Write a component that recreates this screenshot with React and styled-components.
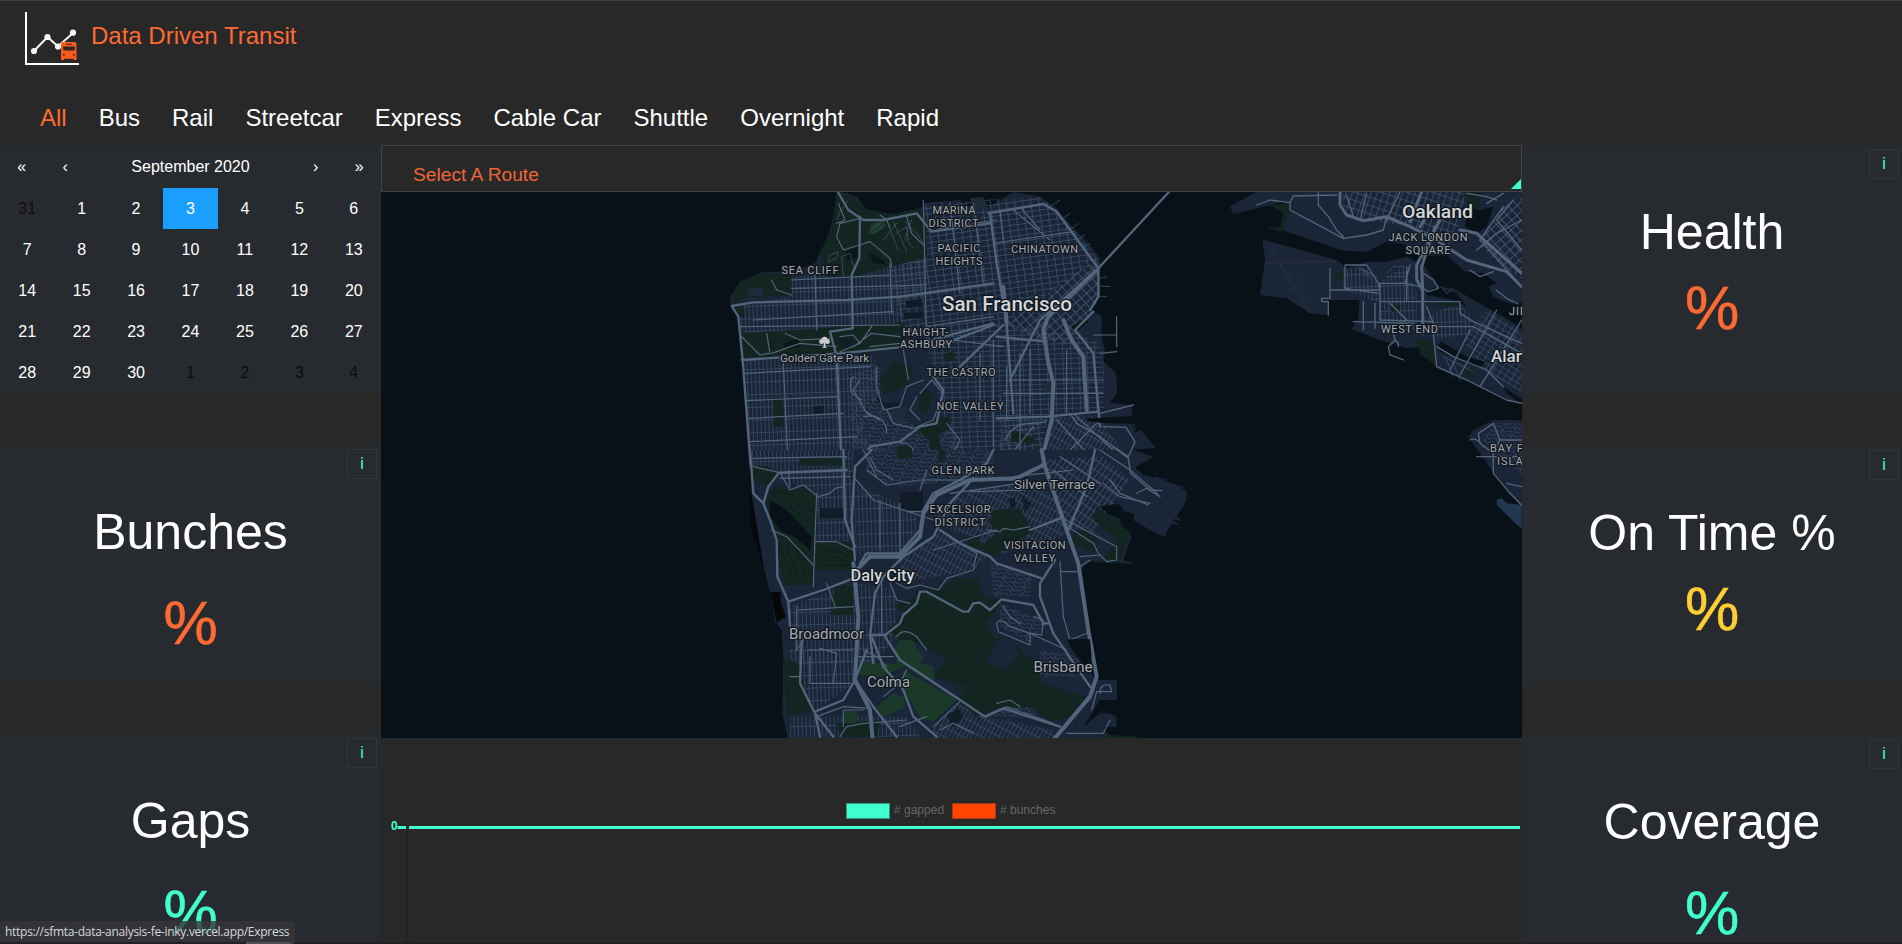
import React from "react";
import styled, { createGlobalStyle } from "styled-components";

const GlobalStyle = createGlobalStyle`
  * { box-sizing: border-box; }
  body { margin: 0; background: #282828; color: #fff; font-family: "Liberation Sans", Arial, sans-serif; overflow: hidden; }
`;

const Page = styled.div`
  position: relative;
  display: flex;
  flex-direction: column;
  width: 1902px;
  height: 944px;
  overflow: hidden;
  background: #282828;
  border-top: 1px solid #3d3d3d;
`;

const Header = styled.header`
  flex: none;
  height: 144px;
  display: flex;
  flex-direction: column;
  justify-content: space-between;
`;

const Brand = styled.div`
  display: flex;
  align-items: flex-start;
  padding: 10px 0 0 24px;
`;

const LogoMark = styled.svg`
  display: block;
  width: 56px;
  height: 56px;
  flex: none;
`;

const BrandName = styled.h1`
  margin: 11px 0 0 11px;
  font-size: 24px;
  line-height: 28px;
  font-weight: 400;
  color: #ff6a32;
`;

const Nav = styled.nav`
  display: flex;
  gap: 32px;
  padding: 0 40px 13px;
`;

const NavItem = styled.a`
  font-size: 24px;
  line-height: 28px;
  color: ${(p) => (p.$active ? "#ff6a32" : "#fff")};
`;

const Main = styled.main`
  flex: 1;
  min-height: 0;
  display: grid;
  grid-template-columns: 381px 1141px 380px;
`;

const Column = styled.section`
  display: flex;
  flex-direction: column;
  gap: 52px;
  min-height: 0;
  overflow: hidden;
`;

const Calendar = styled.div`
  flex: none;
  height: 248px;
  background: #272b30;
`;

const CalendarNav = styled.div`
  display: flex;
  height: 43px;
  align-items: center;
  font-size: 16px;
  line-height: 18px;
`;

const CalendarArrow = styled.span`
  width: 43.5px;
  text-align: center;
`;

const CalendarLabel = styled.span`
  flex: 1;
  text-align: center;
`;

const Days = styled.div`
  display: grid;
  grid-template-columns: repeat(7, 1fr);
  grid-auto-rows: 41px;
`;

const Day = styled.span`
  display: flex;
  align-items: center;
  justify-content: center;
  font-size: 16px;
  line-height: 18px;
  color: ${(p) => (p.$outside ? "#0c0d0e" : "#fff")};
  background: ${(p) => (p.$selected ? "#1a9fff" : "transparent")};
`;

const Card = styled.article`
  flex: none;
  display: flex;
  flex-direction: column;
  align-items: center;
  height: ${(p) => p.$height}px;
  padding-top: 4px;
  background: #272b30;
`;

const InfoButton = styled.button`
  align-self: flex-end;
  flex: none;
  width: 30px;
  height: 30px;
  margin-right: ${(p) => p.$inset}px;
  padding: 0 0 1px;
  border: 1px solid #283a3c;
  background: transparent;
  color: #40ffcf;
  font-family: inherit;
  font-size: 16px;
  line-height: 18px;
`;

const CardTitle = styled.h2`
  margin: 24px 0 0;
  font-size: 50px;
  line-height: 58px;
  font-weight: 400;
`;

const CardValue = styled.p`
  margin: ${(p) => p.$space}px 0 0;
  font-size: 61px;
  line-height: 74px;
  color: ${(p) => p.$color};
  -webkit-text-stroke: 0.5px ${(p) => p.$color};
`;

const Center = styled.section`
  display: flex;
  flex-direction: column;
  min-height: 0;
`;

const RouteSelect = styled.div`
  flex: none;
  display: flex;
  justify-content: space-between;
  align-items: flex-end;
  height: 47px;
  padding: 0 0 2px 31px;
  border: 1px solid #424242;
`;

const RouteLabel = styled.span`
  font-size: 19.2px;
  line-height: 22px;
  padding-bottom: 3px;
  color: #ee6536;
`;

const Corner = styled.span`
  width: 0;
  height: 0;
  border-left: 10px solid transparent;
  border-bottom: 10px solid #40ffcf;
`;

const MapCanvas = styled.svg`
  flex: none;
  display: block;
  width: 1141px;
  height: 546px;
  background: #081117;
`;

const Town = styled.text`
  font-family: Roboto, "Open Sans", sans-serif;
  font-size: ${(p) => p.$size}px;
  font-weight: ${(p) => (p.$strong ? 500 : 400)};
  fill: ${(p) => (p.$strong ? "#d3d5d6" : "#a7abae")};
  stroke: #10161e;
  stroke-width: 2.5px;
  stroke-linejoin: round;
  paint-order: stroke;
`;

const ChartCanvas = styled.svg`
  flex: none;
  display: block;
  width: 1141px;
  height: 206px;
`;

const ChartText = styled.text`
  font-family: "Liberation Sans", Arial, sans-serif;
  font-size: 12px;
  font-weight: ${(p) => (p.$bold ? 700 : 400)};
  fill: ${(p) => p.$color};
`;

const StatusBubble = styled.div`
  position: absolute;
  left: 0;
  bottom: 2px;
  height: 21px;
  width: 295px;
  padding-left: 5px;
  border-top-right-radius: 4px;
  background: rgba(54, 55, 59, 0.82);
  color: #d6d8da;
  font-family: "Open Sans", "Noto Sans", sans-serif;
  font-size: 12px;
  letter-spacing: -0.28px;
  line-height: 21px;
  white-space: nowrap;
`;

const WindowEdge = styled.div`
  position: absolute;
  left: 0;
  right: 0;
  bottom: 0;
  height: 2px;
  padding-left: 246px;
  background: #241f22;
`;

const EdgeTab = styled.div`
  width: 48px;
  height: 2px;
  background: #505050;
  border-right: 4px solid #3c3c3c;
`;

const routes = ["All", "Bus", "Rail", "Streetcar", "Express", "Cable Car", "Shuttle", "Overnight", "Rapid"];
const days = [31, ...Array.from({ length: 30 }, (_, i) => i + 1), 1, 2, 3, 4];

function Logo() {
  return (
    <LogoMark viewBox="24 11 56 56">
      <path d="M26 12V64H79" fill="none" stroke="#fff" strokeWidth="2" />
      <path d="M34 51L47.5 37L58 46.5L73 33" fill="none" stroke="#f5f5f5" strokeWidth="2" />
      <g fill="#f5f5f5">
        <circle cx="34" cy="51" r="3.1" />
        <circle cx="47.5" cy="37" r="3.1" />
        <circle cx="58" cy="46.5" r="3.1" />
        <circle cx="73" cy="32.7" r="3.1" />
      </g>
      <path d="M62.5 42H75L76.5 43.5V60H73.6V58.8H64V60H61V43.5Z" fill="#fa5a1c" />
      <path d="M66 43.7H72V44.8H66ZM63 46.6H75L74.6 50.4H63.4ZM63 54H64.8V55.6H63ZM73 54H74.8V55.6H73Z" fill="#33261f" />
    </LogoMark>
  );
}

function Streets({ id, w, h, angle, color = "#394b61", sw = 1.1 }) {
  return (
    <pattern id={id} width={w} height={h} patternUnits="userSpaceOnUse" patternTransform={`rotate(${angle})`}>
      <path d={`M0 0V${h}M0 0H${w}`} stroke={color} strokeWidth={sw * 4} />
    </pattern>
  );
}

const Shapes = ({ items }) => items.map(([fill, d], i) => <path key={i} fill={fill} d={d} />);
const Roads = ({ width, color = "#53657b", items }) => (
  <g fill="none" stroke={color} strokeWidth={width} strokeLinejoin="round" strokeLinecap="round">
    {items.map((d, i) => <path key={i} d={d} />)}
  </g>
);

const LAND = "#1a2638";
const PARK = "#122520";
const GREEN = "#1b3929";
const WATER = "#081117";
const SLATE = "#111c27";

const northLand =
  "M350 36L345 80L330 150L305 210L285 250L240 265L200 275H130L60 305L30 350L33 385L50 405L62 520L75 640L95 870H1240L1200 735L1100 725V714L1235 708V675H1165L1190 640V600L1185 575L1150 545L1155 515L1145 470V410L1115 390L1140 350V235L1105 190L1060 145L1010 85L960 50L880 36L850 55L800 85L790 55L740 80L720 60L620 68L600 85L520 103L440 88L410 50L380 40Z";

const southLand =
  "M90 0L95 135L130 345L150 430L165 515L185 540L190 620L187 790L205 870H1000L1110 740L1190 748V690H1125L1095 640L1040 572L1105 568L1080 410L1090 390L1075 360L1115 330L1190 335L1245 342L1210 330L1235 260L1160 170L1240 190L1245 215L1325 258L1350 230L1400 150L1395 120L1310 80L1265 85L1245 50L1300 20L1240 0Z";

const baysideLand =
  "M0 0H290V38L265 68L335 75V108L245 112V128L345 132L342 158L362 150L408 205L340 208L345 235L395 230L345 262L370 285L395 290L420 300L440 295L436 304L490 320L480 332L500 335V350L465 365L496 380L480 384L446 372L440 384L482 418L476 424L450 404L458 420L480 435L450 432L435 470L405 450L345 425L340 400L255 380L335 470L290 545L345 552L200 545L178 580L190 600L182 625L208 780L145 778L190 855L230 900H290V960H240L190 1040L240 1000L270 1000L290 1010V1040L250 1042L265 1065L350 1070V1080H0Z";

function NorthSide() {
  return (
    <g transform="translate(720 180) scale(.33333)">
      <Shapes
        items={[
          [LAND, northLand],
          ["url(#avenues)", "M215 290L510 260L620 235L620 350L560 370L530 440L68 458L55 380L215 350Z"],
          ["url(#avenues)", "M70 540L460 525L480 640L420 700L440 780L500 860H96Z"],
          ["url(#north)", "M615 70L960 50L1010 90L1135 240L850 430L650 500L550 460L510 260L615 235Z"],
          ["url(#diagonal)", "M1135 235L850 430L960 480L1050 490L1135 360Z"],
          ["url(#mission)", "M620 500L850 430L1135 480L1150 545V690L1000 700L830 860H700L650 620Z"],
          ["url(#hills)", "M385 580L480 560L480 660L600 750L690 730L730 800V860H400Z"],
          ["url(#south)", "M1000 710H1135L1240 860H960Z"],
          ["url(#north)", "M850 720H980L960 850H830Z"],
          [PARK, "M350 38L345 80L330 150L300 225L320 290L400 292L510 260L620 230V120L600 85L520 103L440 88L400 50Z"],
          [PARK, "M30 355L60 305L130 278L215 285L215 345L75 352L45 372ZM36 380L72 375V415L50 405Z"],
          [PARK, "M60 460L550 428V505L350 525L65 538Z"],
          [PARK, "M478 600L520 545L580 560L570 610L490 645ZM605 620L640 640L620 705L595 690ZM670 520L700 515L705 540L670 545ZM640 715L690 710L690 745L655 765L675 860L640 850L625 780L580 740Z"],
          [PARK, "M530 800L570 795L590 840L530 860ZM880 750L945 775L940 790L870 785ZM160 655H190V740H160ZM285 485L300 470L310 500Z"],
          [SLATE, "M360 470L400 475L395 500L365 505ZM555 362L605 357L610 380L560 385ZM550 400L610 395V415L555 417ZM475 640L490 670L540 665L535 680L500 685L473 665ZM280 678H312V700H280Z"],
          ["#1d2c3b", "M750 55L790 50L805 88L760 85ZM515 680L560 680L550 730L520 725ZM85 325L130 323V350L85 345ZM975 610H1000V650H975Z"],
          [GREEN, "M445 160L455 130L495 120L490 145L455 165Z"],
          ["#0b1717", "M380 215L420 195L410 235L380 240ZM445 215L490 240L500 255L460 250ZM190 490L235 478L240 500L200 510ZM1055 440L1095 415L1105 425L1065 460Z"],
        ]}
      />
      <Roads
        width="2.4"
        color="#40526a"
        items={[
          "M520 125L560 215M510 150L535 210M490 180L530 130M555 125L590 160L610 190M575 120L555 175L580 205M530 160L560 140L565 180",
          "M450 150L480 130M460 160L495 135M330 225L355 215L350 235L325 245ZM350 120L360 95L385 60M370 290L365 230L390 220L400 260",
          "M1020 60L990 80M1050 100L1030 115M1075 130L1050 150M1095 165L1070 180M1110 190L1090 200M1160 290L1140 295M1170 320L1140 318M1160 350H1140",
        ]}
      />
      <Roads
        width="3.5"
        items={[
          "M60 440L540 435M75 580L450 560M80 662L350 650M88 715L370 700M90 785L410 770M215 300L510 285M215 325L620 315M100 420L520 395",
          "M285 280L290 450M190 550L205 860M510 250L515 400M610 60L620 500M690 70L720 340M760 70L790 310M840 90L850 180M900 80L960 150M550 510L565 600",
          "M420 115L360 130L350 170L370 210L420 195L450 185L510 235L515 260M480 105L500 120L510 145M560 110L575 160L615 200M350 130L375 120L355 70",
          "M155 300L170 330L215 345M60 465L120 525L150 520L140 460M195 460L240 480L330 475M360 470L400 465L420 490L360 515M400 500L455 460L540 470M450 500L540 490M420 490L455 440M155 520L240 490L350 500",
          "M470 560V620L490 690L540 680L560 620L610 600M420 600L400 630L440 700L480 720L430 690M500 690L520 730L580 745L640 720L670 640L635 600L600 640",
          "M400 590Q385 600 395 640L425 660M430 710Q500 700 500 760M590 650L570 690L600 720M680 730L720 780L700 820M540 790Q570 780 590 830",
          "M820 190L1060 155M880 90L990 180M660 145L830 120M620 440L820 410M700 480L850 500M870 600H1150M850 640H1150M860 560L860 720M900 520V850M930 510V700M1040 510V700M780 520V720M820 480V800",
          "M855 780Q880 730 930 730T980 720M860 840L940 740M1060 700L1200 830M1010 720L1120 840M1140 720L1000 860",
          "M1190 410V500M1120 465H1190M1140 520L1190 515",
        ]}
      />
      <Roads
        width="7"
        items={[
          "M350 30L385 90L430 120L490 120L590 100L635 155L810 130",
          "M420 110L418 235L395 285L398 445L330 455L350 530L365 860",
          "M35 378L100 367L380 360L540 350L820 310M35 378L55 410L68 540L92 860M65 540L360 520L560 500L820 430",
          "M810 100L830 250L860 430L880 700M805 100L970 72L1010 95L1135 265L1352 30",
          "M650 500L820 435M720 560L850 435M830 470L980 485M830 715L980 710L1135 695M420 860L450 800L540 785L600 740L650 730L670 630L640 590",
          "M1135 265L960 420L870 600M1120 395L1065 450L1120 520L1140 740M1135 265V350L1110 390",
        ]}
      />
      <Roads
        width="12"
        items={["M1125 275L985 410L970 450L985 550L1000 610L995 720L960 860M1030 420L1055 480L1090 530L1100 690M850 320L860 430"]}
      />
    </g>
  );
}

function SouthSide() {
  return (
    <g transform="translate(720 450) scale(.33333)">
      <Shapes
        items={[
          ["#050709", "M88 135L100 135L118 240L140 348L128 345L95 240ZM148 426H182V455L198 500L170 518Z"],
          [LAND, southLand],
          ["#050709", "M150 426H182V455L198 500L170 518Z"],
          ["url(#avenues)", "M95 0H400L400 310H285V150L170 60L95 50Z"],
          ["url(#hills)", "M440 0H820V90L640 100L500 110L440 60Z"],
          ["url(#avenues)", "M400 100L560 170L600 220L540 320H410Z"],
          ["url(#south)", "M640 180L760 120L940 90L1020 160L1030 260L850 310L760 260L660 230ZM540 320L660 240L800 320L760 360L540 400Z"],
          ["url(#avenues)", "M205 470L400 400L530 420V560L460 640H230Z"],
          ["url(#bay)", "M960 30L1150 20L1230 90L1120 250L1040 230Z"],
          ["url(#avenues)", "M205 600L400 600V700L290 780L240 730ZM210 800H560L600 860H210Z"],
          ["url(#south)", "M640 830L710 760L800 800L1000 840V870H640Z"],
          ["url(#hills)", "M820 750H950V800H820ZM840 460L980 520L930 580L840 530ZM960 600L1080 620V680H960ZM810 340L940 370L930 440H820Z"],
          [PARK, "M97 48H140L178 68L150 105L97 90ZM240 25H368V48L240 45ZM135 145L170 105L220 120L250 105L290 130L285 345L275 405H190L170 290ZM288 275H400V360H288Z"],
          [WATER, "M150 150L200 180L275 260L270 300L230 265L180 240L150 200Z"],
          [PARK, "M345 410L400 405V495H330ZM520 470L580 440L600 415L660 420L700 385H775L790 440L850 450L800 520L830 570L770 670L740 710L640 680L680 630L600 580L545 570L500 540L560 490Z"],
          [PARK, "M760 580L860 560L960 650L960 700L1100 740L1050 800L990 815L930 770L830 775L770 800L710 750L740 700Z"],
          [PARK, "M820 180L900 175L930 230L960 230L820 320L780 290L830 250L810 220ZM1060 250L1100 235L1135 270L1130 310L1055 280ZM740 260H780V300H740ZM190 625L235 640L260 740L290 780L200 800Z"],
          [PARK, "M350 820L480 810L470 860H360ZM530 0H575V25H530ZM655 0H675V35H655ZM1130 170L1230 245L1200 330H1150L1190 270L1120 210Z"],
          [GREEN, "M520 600L540 570H575L610 620L600 640L640 650L645 690L620 690L555 650L530 640ZM415 635L560 645L490 680L420 675ZM550 660L710 750L640 815L600 800L540 700ZM470 770L520 730L560 745L550 775L490 800ZM372 780L410 785V820H372Z"],
          [LAND, "M800 630L830 570L870 560L895 610L860 660L800 640Z"],
          [SLATE, "M540 125H610V180H540ZM300 175H370V205H300ZM870 145H885V175H870ZM905 135L935 165L915 185ZM1040 570H1105L1110 640L1060 600ZM680 800L715 775L730 800L700 830Z"],
        ]}
      />
      <Roads
        width="2.4"
        color="#0b1919"
        items={[
          "M160 130Q200 120 240 150T280 190M200 150Q240 155 270 210M210 170L270 220M180 290L220 390M200 290L230 380M210 270L260 340M230 300L255 370M300 310L350 300L390 320M310 330L350 320L390 340M310 345H390",
        ]}
      />
      <Roads
        width="3.5"
        items={[
          "M100 50L180 68L210 120L250 105L295 140L330 130L345 115L370 110M290 130L282 340L280 410M285 275L350 275L400 300M155 240L200 260L280 345M205 60L210 110M100 25L380 20M180 85L390 80",
          "M440 60L500 105L600 90H900M400 80L460 150L640 210M540 160V310M480 150V300M560 185H620M450 20L470 60L520 90M620 60L600 120M430 0L470 80",
          "M700 270L770 310L760 360L680 385L655 420L600 405L560 415L530 400M800 240L840 245L850 235L880 240L930 230M750 125L920 120M690 130L900 100M640 300L830 240",
          "M230 470V600L250 570M235 480L400 470M320 400L345 470M485 380V550M510 400L530 450L570 460M530 560Q550 530 590 560L620 600",
          "M265 600H400M270 620V700H390M300 595L350 610L340 700M210 680H240M430 600L470 620L500 650M410 620H520",
          "M830 520Q840 500 870 530L930 550L965 555L970 510L940 500M830 520L835 545L930 585V550L1040 600M850 470L870 500L900 520M1020 335L1030 500L1050 570L1100 550M1020 365H1070",
          "M1020 200L1190 290V330L1160 335L1135 310L1120 280L1050 235M1080 320L1140 315M1080 350L1110 330M1140 730Q1140 700 1170 705L1175 725H1130L1115 780M1040 850H1150L1170 810",
          "M880 80L1060 60M1140 0L1230 60L1300 120L1320 140L1280 115L1250 130M1150 100L1200 140L1290 160M1020 20L1140 100M1000 60L1100 140",
          "M800 800L860 770L1000 820M720 755L640 830M660 840L700 820L760 850M830 760L870 750L900 770M490 740L540 700L560 660M430 780H370V830M540 830L620 800",
          "M360 860L380 830L430 820L560 810M290 800L370 770L450 775",
        ]}
      />
      <Roads
        width="7"
        items={[
          "M90 0L100 130L130 160L150 210L170 270L172 380L205 455L210 530M205 455L310 420L400 385M180 68L380 60M370 0L375 210L405 290",
          "M175 70L145 110L130 160M455 0L405 50L395 210L405 330M660 240L720 280L810 320L830 340L965 385M820 0L800 40L720 90L640 130L610 180L600 240L530 320",
          "M460 640L450 555L465 430L490 380L550 320L640 260L690 160L760 85M450 555H495L540 520L550 495L590 460L600 425L620 425L730 485H745L760 460L780 458L810 480L845 448L940 465L970 520H985",
          "M1125 0L1100 110L1045 240M930 240L1020 205M550 310H440L420 340M455 560L490 650L550 720L580 800L650 860M495 560L540 630L720 750L795 800L850 775L1020 830",
          "M245 570L240 700L285 790L300 860M285 785L370 750L405 690L440 600M340 860L285 790M1005 330L960 400V440L1000 550L1110 710M405 690L460 770L530 860",
        ]}
      />
      <Roads
        width="12"
        items={[
          "M400 340L415 500L405 690L450 780L458 870M965 0L975 50L1040 240L1075 340L1105 540L1130 680L1110 740L1000 870M970 45L890 85L750 90L650 135L610 190L600 260L540 320H450L400 370",
        ]}
      />
    </g>
  );
}

function EastBay() {
  return (
    <g transform="translate(1220 190) scale(.33333)">
      <Shapes
        items={[
          [LAND, "M110 5L30 50L40 72L190 35L205 60L185 120L370 182L440 185L500 155L560 165L600 200L680 195L735 245L790 250L910 340V5Z"],
          [PARK, "M140 115L180 110L190 70L150 45L205 40L208 70L185 125ZM735 5H790L775 50L745 55Z"],
          [LAND, "M128 148L350 210L380 235L440 215H500L560 200L610 225L660 290L710 300L750 325L850 380L910 420V645L840 620L735 570L650 535L600 470L560 475L480 450L395 418L415 385L418 330H325V375L270 370L200 325L120 315L135 210Z"],
          [LAND, "M805 290L840 275L890 300L905 340L870 340L820 320Z"],
          ["url(#oakland)", "M370 5H730L735 70L690 170L570 110L430 90L370 50Z"],
          ["url(#diagonal)", "M770 160L850 50L910 20V270L850 230Z"],
          ["url(#avenues)", "M370 235H440L475 280L555 225L590 310V420H480V340L370 300Z"],
          ["url(#avenues)", "M610 380L720 340L760 390V430L650 450Z"],
          ["url(#alameda)", "M730 450L800 355L910 430V610L860 580L790 540Z"],
          [PARK, "M620 335L720 330V350L630 345ZM590 450L640 455L655 535L600 490ZM345 245H370V270H345ZM515 345H540V365H515ZM730 540L760 530L765 565L740 560Z"],
          [WATER, "M620 310Q640 280 680 300L710 310L740 350L700 330L620 315ZM745 50L780 60L820 50L800 110L770 130L735 110Z"],
          [WATER, "M655 465L665 455L740 500L795 515L780 535L740 520L660 485ZM850 590L910 630V645L860 610Z"],
          [LAND, "M820 690H910V960L870 910L815 840L780 790L745 740L760 720Z"],
          ["url(#hills)", "M825 700H910V860L840 800L790 750Z"],
          ["#223650", "M830 930L845 925L860 940L905 945V1017L870 985L830 945Z"],
        ]}
      />
      <Roads width="8" color="#222b38" items={["M140 218L345 214", "M155 180L270 365"]} />
      <Roads width="3" color="#222b38" items={["M180 165L220 205M245 215L240 315M190 315L310 220M200 285L300 345M305 220V320"]} />
      <Roads
        width="2.4"
        color="#40526a"
        items={["M410 235Q430 225 440 260M420 240Q440 235 450 265M430 240L470 260M500 250L520 230H550M500 260H560M665 290L680 310L700 295M680 510L700 560M700 520L720 570M670 500L760 545"]}
      />
      <Roads
        width="4"
        items={[
          "M110 45L150 30L210 38L220 18L350 15M210 38V60L370 145L440 135L490 120L500 80M295 5V45L325 80L350 120L370 140M380 15L400 80M440 10L420 90M540 5L500 90",
          "M330 235V325H305V335H325V375M330 300H480L475 280L440 225H375V295L475 310M480 280V390L640 395M480 335H720V370M430 335V420M465 340V415M400 395L580 400M510 340L560 390",
          "M560 280H475M560 230V330M570 225L555 280L600 290L625 305L655 295L640 270L610 250M520 430L525 450L505 470L510 495L550 510M525 450L535 460V470",
          "M640 430L650 530L740 570L860 630L905 640M650 470L700 500L800 540L850 590M720 555L830 360M780 590L905 390M690 540L750 420M620 350L640 400V440M650 410H760L905 490M720 370L760 395L905 460",
          "M740 10L800 20L830 30M850 50L780 150L905 290M905 90L830 130L770 180M880 30L830 90L905 180M800 40L850 10M750 240L780 260L820 245",
          "M820 700L775 730L780 760L820 790V850L870 910L905 945M820 700L840 750L830 770M750 750Q770 740 790 770M860 880L905 890M770 800H905M840 750H905",
          "M828 300L860 325L895 342",
        ]}
      />
      <Roads
        width="9"
        items={["M360 5V45L380 75L430 92L500 80L570 110L640 145L740 210L860 245L905 290M600 110L630 60M605 5L570 95M660 90L590 225L590 270L608 300V430M645 110L605 230L608 300M720 120L770 130L905 250"]}
      />
    </g>
  );
}

function MapView() {
  return (
    <MapCanvas viewBox="381 192 1141 546">
      <defs>
        <Streets id="avenues" w={12} h={38} angle={-2} />
        <Streets id="north" w={24} h={17} angle={-8} color="#3f5168" />
        <Streets id="diagonal" w={21} h={21} angle={-42} color="#4b5c72" />
        <Streets id="mission" w={24} h={15} angle={-2} />
        <Streets id="south" w={12} h={26} angle={28} />
        <Streets id="bay" w={14} h={26} angle={35} color="#3f5168" />
        <Streets id="oakland" w={18} h={24} angle={18} color="#43546c" />
        <Streets id="alameda" w={20} h={16} angle={32} />
        <pattern id="hills" width="34" height="26" patternUnits="userSpaceOnUse" patternTransform="rotate(25)">
          <path d="M0 6Q9 -4 17 6T34 6M0 19Q9 9 17 19T34 19M17 6V19" fill="none" stroke="#394b61" strokeWidth="2.4" />
        </pattern>
      </defs>
      <g transform="translate(1020 380) scale(.33333)">
        <path fill={LAND} d={baysideLand} />
        <path fill={PARK} d="M335 130L350 140L345 160ZM338 208L395 230L345 235ZM260 380L290 370L310 400L300 430L335 470L300 530L240 440ZM200 545L240 535L345 552ZM265 1065L350 1070V1080H265Z" />
      </g>
      <NorthSide />
      <SouthSide />
      <g transform="translate(1020 380) scale(.33333)">
        <path fill={WATER} d="M200 114H420V128L250 130L200 122ZM240 378L300 372L320 410L345 425L300 415L265 405ZM145 778H210L215 830L190 855L150 800Z" />
        <Roads width="4" items={["M250 140L318 142L345 185L325 230L250 180M150 100L170 130L240 170L325 235L332 280L390 330L425 332M270 300L300 340L385 375M240 100L340 75"]} />
      </g>
      <EastBay />
      <g textAnchor="middle">
        {[
          ["MARINA", 954, 214, 43], ["DISTRICT", 953.5, 226.5, 50], ["PACIFIC", 959, 252, 43], ["HEIGHTS", 959, 264.5, 47],
          ["CHINATOWN", 1044.5, 252.5, 67], ["SEA CLIFF", 810, 274, 57], ["HAIGHT-", 925.5, 336, 46], ["ASHBURY", 926, 348, 52],
          ["THE CASTRO", 961, 376, 69], ["NOE VALLEY", 970, 410, 67], ["GLEN PARK", 963, 473.5, 63], ["EXCELSIOR", 960, 513, 61],
          ["DISTRICT", 960, 526, 51], ["VISITACION", 1034.5, 549, 62], ["VALLEY", 1034.5, 561.5, 41], ["JACK LONDON", 1428, 241, 79],
          ["SQUARE", 1428, 253.5, 45], ["WEST END", 1409.5, 333, 57],
        ].map(([t, x, y, w]) => (
          <Town key={t + y} x={x} y={y} $size={11} textLength={w}>{t}</Town>
        ))}
        {[
          ["San Francisco", 1007, 311, 130, 20, 1], ["Oakland", 1437.5, 217.5, 71, 18, 1], ["Daly City", 882.5, 581, 64, 17, 1],
          ["Golden Gate Park", 824.5, 362, 89, 11.5], ["Silver Terrace", 1054.5, 489, 81, 13], ["Broadmoor", 826.5, 639, 75, 15],
          ["Brisbane", 1063, 672, 59, 15], ["Colma", 888.5, 686.5, 43, 15],
        ].map(([t, x, y, w, s, b]) => (
          <Town key={t} x={x} y={y} $size={s} $strong={b} textLength={w} lengthAdjust="spacingAndGlyphs">{t}</Town>
        ))}
      </g>
      <Town x="1491" y="362" $size={17} $strong={1}>Alam</Town>
      <Town x="1509" y="315" $size={11} letterSpacing="1">JIN</Town>
      <Town x="1490" y="452" $size={11} letterSpacing="1">BAY FA</Town>
      <Town x="1497" y="464.5" $size={11} letterSpacing="1">ISLA</Town>
      <g fill="#c9cccd">
        <circle cx="824.5" cy="339.5" r="2.8" />
        <circle cx="821.7" cy="341.5" r="2.5" />
        <circle cx="827.4" cy="341.5" r="2.5" />
        <path d="M823.7 342H825.4V346.5L827 348H822L823.7 346.5Z" />
      </g>
    </MapCanvas>
  );
}

function Chart() {
  return (
    <ChartCanvas viewBox="381 738 1141 206">
      <rect x="406" y="826" width="2.5" height="116" fill="#232323" />
      <rect x="846.5" y="803.5" width="43" height="15" fill="#40ffcf" stroke="#34967d" />
      <ChartText x="894" y="814" $color="#666">{"# gapped"}</ChartText>
      <rect x="952.5" y="803.5" width="43" height="15" fill="#ff4500" stroke="#a2381a" />
      <ChartText x="1000" y="814" $color="#666">{"# bunches"}</ChartText>
      <path d="M397.5 827.5H406M409 827.5H1520" stroke="#40ffcf" strokeWidth="3" />
      <ChartText x="391" y="830" $color="#40ffcf" $bold>0</ChartText>
    </ChartCanvas>
  );
}

function Metric({ title, color, height, space, inset }) {
  return (
    <Card $height={height}>
      <InfoButton $inset={inset}>i</InfoButton>
      <CardTitle>{title}</CardTitle>
      <CardValue $color={color} $space={space}>%</CardValue>
    </Card>
  );
}

export default function App() {
  return (
    <Page>
      <GlobalStyle />
      <Header>
        <Brand>
          <Logo />
          <BrandName>Data Driven Transit</BrandName>
        </Brand>
        <Nav>
          {routes.map((r, i) => <NavItem key={r} $active={i === 0}>{r}</NavItem>)}
        </Nav>
      </Header>
      <Main>
        <Column>
          <Calendar>
            <CalendarNav>
              <CalendarArrow>«</CalendarArrow>
              <CalendarArrow>‹</CalendarArrow>
              <CalendarLabel>September 2020</CalendarLabel>
              <CalendarArrow>›</CalendarArrow>
              <CalendarArrow>»</CalendarArrow>
            </CalendarNav>
            <Days>
              {days.map((d, i) => (
                <Day key={i} $outside={i === 0 || i > 30} $selected={i === 3}>{d}</Day>
              ))}
            </Days>
          </Calendar>
          <Metric title="Bunches" color="#ff6a32" height={237} space={25} inset={4} />
          <Metric title="Gaps" color="#40ffcf" height={260} space={25} inset={4} />
        </Column>
        <Center>
          <RouteSelect>
            <RouteLabel>Select A Route</RouteLabel>
            <Corner />
          </RouteSelect>
          <MapView />
          <Chart />
        </Center>
        <Column>
          <Metric title="Health" color="#ff6a32" height={249} space={10} inset={3} />
          <Metric title="On Time %" color="#ffce32" height={237} space={10} inset={3} />
          <Metric title="Coverage" color="#40ffcf" height={260} space={25} inset={3} />
        </Column>
      </Main>
      <WindowEdge><EdgeTab /></WindowEdge>
      <StatusBubble>https://sfmta-data-analysis-fe-inky.vercel.app/Express</StatusBubble>
    </Page>
  );
}
